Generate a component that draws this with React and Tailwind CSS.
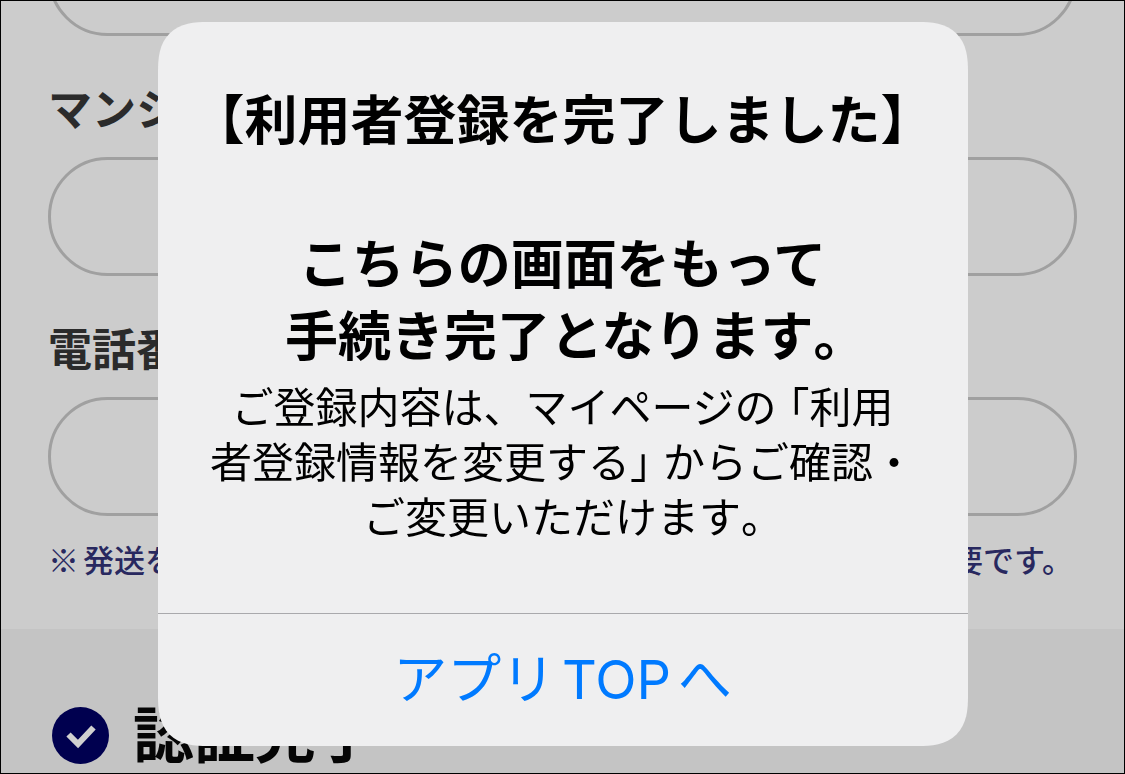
import React from "react";

const Field = ({ id, label }) => (
  <div>
    <label
      htmlFor={id}
      className="mt-[49px] mb-[28px] block text-[44px] leading-[44px] font-semibold whitespace-nowrap text-[#2b2b2b]"
    >
      {label}
    </label>
    <input
      id={id}
      type="text"
      className="block h-[119px] w-full rounded-full border-3 border-[#a0a0a0] bg-transparent px-10 text-[44px] outline-none"
    />
  </div>
);

// Half-width punctuation
const Half = ({ className = "", children }) => (
  <span className={`[font-feature-settings:'halt'] ${className}`}>
    {children}
  </span>
);

const RegistrationForm = () => (
  <main className="flex min-h-screen flex-col overflow-hidden border border-black bg-[#cccccc]">
    <form className="px-[47px] pb-[55px]">
      <input
        type="text"
        aria-label="住所"
        className="-mt-[84px] block h-[119px] w-full rounded-full border-3 border-[#a0a0a0] bg-transparent px-10 text-[44px] outline-none"
      />
      <Field id="building" label="マンション名" />
      <Field id="phone" label="電話番号" />
      <p className="mt-[28px] flex justify-between pr-1 text-[31px] leading-[30px] font-medium text-[#28285f]">
        <span className="flex gap-1">
          <span>※</span>
          <span>発送を</span>
        </span>
        <span>要です。</span>
      </p>
    </form>

    <section className="flex flex-1 items-start gap-6 bg-[#c4c4c4] px-[51px] pt-[78px] pb-2">
      <svg viewBox="0 0 57 57" className="size-[57px] shrink-0" aria-hidden="true">
        <circle cx="28.5" cy="28.5" r="28.5" fill="#00004f" />
        <path
          d="M16.5 27.5 26 37 41.5 20.5"
          fill="none"
          stroke="#d0d0d0"
          strokeWidth="6"
        />
      </svg>
      <h2 className="text-[61px] leading-[50px] font-bold text-[#050505]">
        認証完了
      </h2>
    </section>
  </main>
);

const CompleteDialog = () => (
  <div className="fixed inset-0 flex items-start justify-center pt-[22px]">
    <div
      role="dialog"
      aria-modal="true"
      aria-labelledby="dialog-title"
      className="w-[72%] overflow-hidden rounded-[50px] bg-[#efeff0] text-center text-black [corner-shape:superellipse(1.4)]"
    >
      <div className="pt-[59px] pb-[71px] whitespace-nowrap">
        <h1
          id="dialog-title"
          className="text-[53px] leading-[72px] font-semibold"
        >
          【利用者登録を完了しました】
          <br />
          <br />
          こちらの画面をもって
          <br />
          手続き完了となります<Half>。</Half>
        </h1>
        <p className="mt-2 text-[42px] leading-[55px]">
          ご登録内容は、マイページの<Half className="ml-3">「</Half>利用
          <br />
          者登録情報を変更する<Half className="mr-3">」</Half>からご確認・
          <br />
          ご変更いただけます<Half>。</Half>
        </p>
      </div>
      <button
        type="button"
        className="block h-[133px] w-full border-t border-[#a9a9ac] font-['Inter','Noto_Sans_CJK_JP',sans-serif] text-[54px] leading-[72px] text-[#007aff] [text-autospace:normal]"
      >
        アプリTOPへ
      </button>
    </div>
  </div>
);

const App = () => (
  <div className="font-['Noto_Sans_CJK_JP',sans-serif]" lang="ja">
    <RegistrationForm />
    <CompleteDialog />
  </div>
);

export default App;
